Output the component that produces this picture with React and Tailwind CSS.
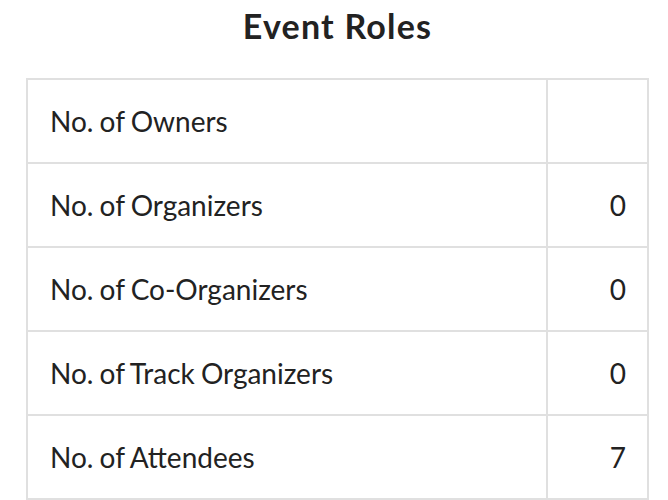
import React from "react";

const roles = [
  { label: "No. of Owners", count: "" },
  { label: "No. of Organizers", count: 0 },
  { label: "No. of Co-Organizers", count: 0 },
  { label: "No. of Track Organizers", count: 0 },
  { label: "No. of Attendees", count: 7 },
];

export default function App() {
  return (
    <div
      className="min-h-screen bg-white text-[#222222]"
      style={{ fontFamily: "Lato, 'Open Sans', sans-serif" }}
    >
      <div className="ml-[26px] w-[623px]">
        {/* Title */}
        <h2 className="pt-[6px] h-[78px] text-center text-[34px] leading-[40px] font-bold tracking-[1.2px]">
          Event Roles
        </h2>

        {/* Roles table */}
        <table className="w-full border-collapse">
          <tbody>
            {roles.map((r) => (
              <tr key={r.label}>
                <td className="h-[84px] border-2 border-[#e0e0e0] pl-[22px] text-[28px] [word-spacing:-1px] align-middle">
                  {r.label}
                </td>
                <td className="h-[84px] w-[101px] border-2 border-[#e0e0e0] pr-[21px] text-right text-[28px] align-middle">
                  {r.count}
                </td>
              </tr>
            ))}
          </tbody>
        </table>
      </div>
    </div>
  );
}
